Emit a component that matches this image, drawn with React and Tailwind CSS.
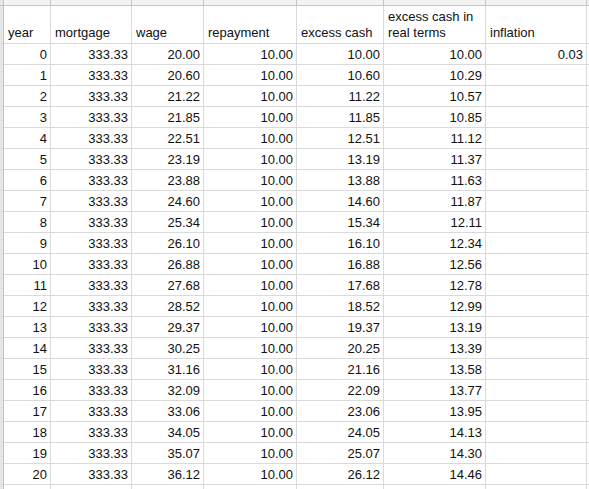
const WAGES = ['20.00', '20.60', '21.22', '21.85', '22.51', '23.19', '23.88', '24.60', '25.34', '26.10', '26.88',
               '27.68', '28.52', '29.37', '30.25', '31.16', '32.09', '33.06', '34.05', '35.07', '36.12']
const REAL  = ['10.00', '10.29', '10.57', '10.85', '11.12', '11.37', '11.63', '11.87', '12.11', '12.34', '12.56',
               '12.78', '12.99', '13.19', '13.39', '13.58', '13.77', '13.95', '14.13', '14.30', '14.46']

const ROWS = WAGES.map((w, i) => ({
  year:      String(i),
  mortgage:  '333.33',
  wage:      w,
  repayment: '10.00',
  excess:    (parseFloat(w) - 10).toFixed(2),
  real:      REAL[i],
  inflation: i === 0 ? '0.03' : '',
}))

const COLS = 'grid grid-cols-[4px_47px_81px_72px_93px_87px_102px_101px_2px]'

// cella dati: bordo destro e inferiore, testo in basso
function Cell({ children, right = true, className = '' }) {
  return (
    <div
      className={`h-[21px] border-r border-b border-[#dadada] px-[3px] pb-[1px] flex items-end leading-[16px] ${right ? 'justify-end' : 'justify-start'} ${className}`}
    >
      {children}
    </div>
  )
}

function HeadCell({ children }) {
  return (
    <div className="h-[38px] border-r border-b border-[#dadada] px-[4px] pb-[2px] flex items-end leading-[16px]">
      <span>{children}</span>
    </div>
  )
}

function Gutter({ h = 'h-[21px]' }) {
  return <div className={`${h} bg-[#e6e6e6] border-r border-[#c4c4c4]`} />
}

export default function App() {
  return (
    <div className="w-[589px] h-[489px] overflow-hidden bg-white text-[13px] text-[#111] font-['Liberation_Sans',Arial,sans-serif]">

      {/* Striscia intestazione colonne */}
      <div className={COLS}>
        <div className="h-[6px] bg-[#e6e6e6] border-r border-b border-[#c4c4c4]" />
        {Array.from({ length: 7 }, (_, i) => (
          <div key={i} className="h-[6px] bg-[#f3f3f3] border-r border-b border-[#c4c4c4]" />
        ))}
        <div className="h-[6px] bg-[#f3f3f3] border-b border-[#c4c4c4]" />
      </div>

      {/* Riga titoli */}
      <div className={COLS}>
        <Gutter h="h-[38px]" />
        <HeadCell>year</HeadCell>
        <HeadCell>mortgage</HeadCell>
        <HeadCell>wage</HeadCell>
        <HeadCell>repayment</HeadCell>
        <HeadCell>excess cash</HeadCell>
        <HeadCell>excess cash in<br />real terms</HeadCell>
        <HeadCell>inflation</HeadCell>
        <div className="h-[38px] border-b border-[#dadada]" />
      </div>

      {/* Righe dati */}
      {ROWS.map(r => (
        <div key={r.year} className={COLS}>
          <Gutter />
          <Cell>{r.year}</Cell>
          <Cell>{r.mortgage}</Cell>
          <Cell>{r.wage}</Cell>
          <Cell>{r.repayment}</Cell>
          <Cell>{r.excess}</Cell>
          <Cell>{r.real}</Cell>
          <Cell>{r.inflation}</Cell>
          <div className="h-[21px] border-b border-[#dadada]" />
        </div>
      ))}

      {/* Riga vuota tagliata */}
      <div className={COLS}>
        <Gutter />
        {Array.from({ length: 7 }, (_, i) => (
          <Cell key={i} />
        ))}
        <div className="h-[21px]" />
      </div>
    </div>
  )
}
